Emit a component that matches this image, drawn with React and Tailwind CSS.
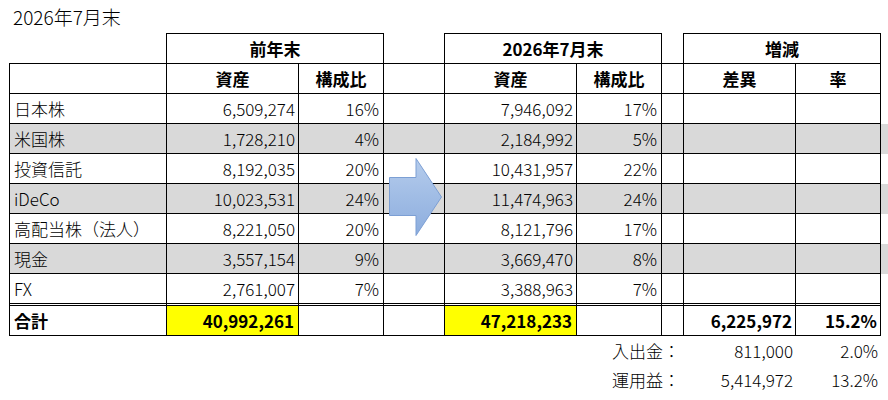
import React from "react";

const COLS = "grid grid-cols-[158px_132px_85px_61px_132px_85px_22px_112px_85px]";

const rows = [
  ["日本株", "6,509,274", "16%", "7,946,092", "17%", false],
  ["米国株", "1,728,210", "4%", "2,184,992", "5%", true],
  ["投資信託", "8,192,035", "20%", "10,431,957", "22%", false],
  ["iDeCo", "10,023,531", "24%", "11,474,963", "24%", true],
  ["高配当株（法人）", "8,221,050", "20%", "8,121,796", "17%", false],
  ["現金", "3,557,154", "9%", "3,669,470", "8%", true],
  ["FX", "2,761,007", "7%", "3,388,963", "7%", false],
];

function Arrow() {
  return (
    <svg
      className="absolute left-[389px] top-[158px]"
      width="54"
      height="79"
      viewBox="0 0 54 79"
    >
      <defs>
        <linearGradient id="ag" x1="0" y1="0" x2="0" y2="1">
          <stop offset="0" stopColor="#b5ccec" />
          <stop offset="1" stopColor="#8cadde" />
        </linearGradient>
      </defs>
      <polygon
        points="0.5,19.5 27,19.5 27,0.5 52.5,39 27,77.5 27,57.5 0.5,57.5"
        fill="url(#ag)"
        stroke="#7c9fd4"
        strokeWidth="1"
      />
    </svg>
  );
}

export default function App() {
  const b = "border-black";
  const num = "flex items-center justify-end pr-[3px] whitespace-nowrap";
  const pct = "flex items-center justify-end pr-[4px] whitespace-nowrap";
  return (
    <div className="relative w-[888px] h-[400px] bg-white overflow-hidden text-black text-[17px] font-light font-['Noto_Sans_CJK_JP','Noto_Sans',sans-serif]">
      <div className="h-[33px] pl-[13px] pt-[4px] leading-[26px] text-[19px]">2026年7月末</div>
      <div className="ml-[9px]">
        {/* header row 1 */}
        <div className={`${COLS} h-[31px] font-bold`}>
          <div className={`border-r border-b ${b}`}></div>
          <div className={`col-span-2 border-t border-r border-b ${b} flex items-center justify-center`}>前年末</div>
          <div className={`border-r border-b ${b}`}></div>
          <div className={`col-span-2 border-t border-r border-b ${b} flex items-center justify-center`}>2026年7月末</div>
          <div className={`border-r border-b ${b}`}></div>
          <div className={`col-span-2 border-t border-r border-b ${b} flex items-center justify-center`}>増減</div>
        </div>
        {/* header row 2 */}
        <div className={`${COLS} h-[30px] font-bold`}>
          <div className={`border-l border-r border-b ${b}`}></div>
          <div className={`border-r border-b ${b} flex items-center justify-center`}>資産</div>
          <div className={`border-r border-b ${b} flex items-center justify-center`}>構成比</div>
          <div className={`border-r border-b ${b}`}></div>
          <div className={`border-r border-b ${b} flex items-center justify-center`}>資産</div>
          <div className={`border-r border-b ${b} flex items-center justify-center`}>構成比</div>
          <div className={`border-r border-b ${b}`}></div>
          <div className={`border-r border-b ${b} flex items-center justify-center`}>差異</div>
          <div className={`border-r border-b ${b} flex items-center justify-center`}>率</div>
        </div>
        {rows.map(([label, a1, p1, a2, p2, gray], i) => {
          const last = i === rows.length - 1;
          const bb = last ? "" : "border-b";
          const bg = gray ? "bg-[#d9d9d9]" : "bg-white";
          const c = `border-r ${bb} ${b}`;
          return (
            <div key={label} className={`${COLS} ${last ? "h-[29px]" : "h-[30px]"} ${bg}`}>
              <div className={`border-l ${c} flex items-center pl-[4px] whitespace-nowrap`}>{label}</div>
              <div className={`${c} ${num}`}>{a1}</div>
              <div className={`${c} ${pct}`}>{p1}</div>
              <div className={c}></div>
              <div className={`${c} ${num}`}>{a2}</div>
              <div className={`${c} ${pct}`}>{p2}</div>
              <div className={c}></div>
              <div className={c}></div>
              <div className={c}></div>
            </div>
          );
        })}
        {/* total row */}
        <div className={`${COLS} h-[33px] font-bold`}>
          <div className={`border-l border-t-[3px] border-r border-b border-double bg-clip-padding ${b} flex items-center pl-[4px]`}>合計</div>
          <div className={`border-t-[3px] border-r border-b border-double bg-clip-padding bg-[#ffff00] ${b} ${num} pr-[4px]`}>40,992,261</div>
          <div className={`border-t-[3px] border-r border-b border-double ${b}`}></div>
          <div className={`border-t-[3px] border-r border-b border-double ${b}`}></div>
          <div className={`border-t-[3px] border-r border-b border-double bg-clip-padding bg-[#ffff00] ${b} ${num} pr-[4px]`}>47,218,233</div>
          <div className={`border-t-[3px] border-r border-b border-double ${b}`}></div>
          <div className={`border-t-[3px] border-r border-b border-double ${b}`}></div>
          <div className={`border-t-[3px] border-r border-b border-double ${b} ${num}`}>6,225,972</div>
          <div className={`border-t-[3px] border-r border-b border-double ${b} ${num}`}>15.2%</div>
        </div>
        {/* summary rows */}
        {[
          ["入出金：", "811,000", "2.0%"],
          ["運用益：", "5,414,972", "13.2%"],
        ].map(([l, v, p]) => (
          <div key={l} className={`${COLS} h-[29px]`}>
            <div className="col-span-6"></div>
            <div className="flex items-center justify-end pr-[4px] whitespace-nowrap overflow-visible">{l}</div>
            <div className={num}>{v}</div>
            <div className={num}>{p}</div>
          </div>
        ))}
      </div>
      <Arrow />
    </div>
  );
}
